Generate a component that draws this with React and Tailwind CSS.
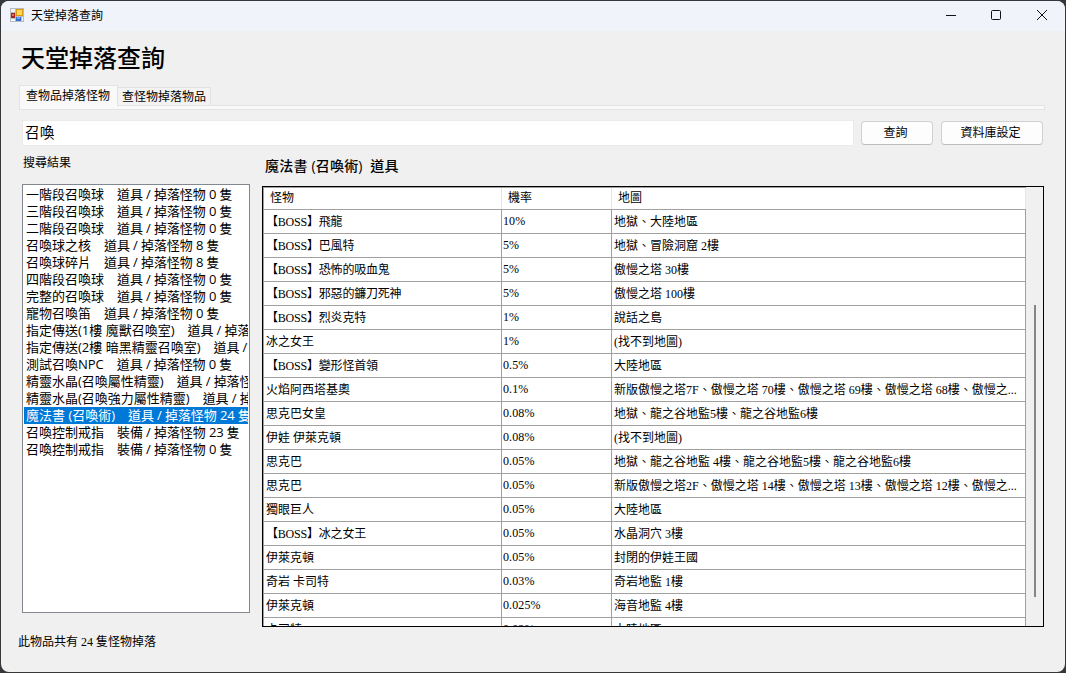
const drops = [
  ["【BOSS】飛龍", "10%", "地獄、大陸地區"],
  ["【BOSS】巴風特", "5%", "地獄、冒險洞窟 2樓"],
  ["【BOSS】恐怖的吸血鬼", "5%", "傲慢之塔 30樓"],
  ["【BOSS】邪惡的鐮刀死神", "5%", "傲慢之塔 100樓"],
  ["【BOSS】烈炎克特", "1%", "說話之島"],
  ["冰之女王", "1%", "(找不到地圖)"],
  ["【BOSS】變形怪首領", "0.5%", "大陸地區"],
  ["火焰阿西塔基奧", "0.1%", "新版傲慢之塔7F、傲慢之塔 70樓、傲慢之塔 69樓、傲慢之塔 68樓、傲慢之..."],
  ["思克巴女皇", "0.08%", "地獄、龍之谷地監5樓、龍之谷地監6樓"],
  ["伊娃 伊萊克頓", "0.08%", "(找不到地圖)"],
  ["思克巴", "0.05%", "地獄、龍之谷地監 4樓、龍之谷地監5樓、龍之谷地監6樓"],
  ["思克巴", "0.05%", "新版傲慢之塔2F、傲慢之塔 14樓、傲慢之塔 13樓、傲慢之塔 12樓、傲慢之..."],
  ["獨眼巨人", "0.05%", "大陸地區"],
  ["【BOSS】冰之女王", "0.05%", "水晶洞穴 3樓"],
  ["伊萊克頓", "0.05%", "封閉的伊娃王國"],
  ["奇岩 卡司特", "0.03%", "奇岩地監 1樓"],
  ["伊萊克頓", "0.025%", "海音地監 4樓"],
  ["卡司特", "0.02%", "大陸地區"],
];

const items = [
  ["一階段召喚球", "道具 / 掉落怪物 0 隻"],
  ["三階段召喚球", "道具 / 掉落怪物 0 隻"],
  ["二階段召喚球", "道具 / 掉落怪物 0 隻"],
  ["召喚球之核", "道具 / 掉落怪物 8 隻"],
  ["召喚球碎片", "道具 / 掉落怪物 8 隻"],
  ["四階段召喚球", "道具 / 掉落怪物 0 隻"],
  ["完整的召喚球", "道具 / 掉落怪物 0 隻"],
  ["寵物召喚笛", "道具 / 掉落怪物 0 隻"],
  ["指定傳送(1樓 魔獸召喚室)", "道具 / 掉落怪物 0 隻"],
  ["指定傳送(2樓 暗黑精靈召喚室)", "道具 / 掉落怪物 0 隻"],
  ["測試召喚NPC", "道具 / 掉落怪物 0 隻"],
  ["精靈水晶(召喚屬性精靈)", "道具 / 掉落怪物 0 隻"],
  ["精靈水晶(召喚強力屬性精靈)", "道具 / 掉落怪物 0 隻"],
  ["魔法書 (召喚術)", "道具 / 掉落怪物 24 隻"],
  ["召喚控制戒指", "裝備 / 掉落怪物 23 隻"],
  ["召喚控制戒指", "裝備 / 掉落怪物 0 隻"],
];

const SELECTED = 13;

function AppIcon() {
  return (
    <svg width="14" height="14" viewBox="0 0 14 14" shapeRendering="crispEdges">
      <rect width="14" height="14" fill="#b9bcc2" />
      <rect x="1" y="1" width="4" height="3" fill="#eef1f5" />
      <rect x="1" y="11" width="4" height="2" fill="#f7f7f7" />
      <rect x="12" y="9" width="1" height="4" fill="#f7f7f7" />
      <rect x="1" y="5" width="4" height="5" fill="#a8231a" />
      <rect x="2" y="6" width="2" height="2" fill="#e0705f" />
      <rect x="6" y="1" width="7" height="7" fill="#d99a10" />
      <rect x="7" y="2" width="5" height="5" fill="#ffd75a" />
      <rect x="6" y="9" width="5" height="4" fill="#2f6fd0" />
      <rect x="7" y="9" width="3" height="2" fill="#6ea5ee" />
    </svg>
  );
}

function TitleBar() {
  return (
    <div className="flex h-[30px] shrink-0 items-center bg-[#f0f3fa] pb-[2px] pl-[9px]">
      <AppIcon />
      <span className="ml-[7px] flex-1 font-['Noto_Sans_CJK_TC',sans-serif] text-xs leading-none">
        天堂掉落查詢
      </span>
      <svg width="115" height="12" viewBox="0 0 115 12" fill="none" stroke="#111" className="mr-[11px]">
        <path d="M7 6.5h10" />
        <rect x="52.5" y="1.5" width="9" height="9" rx="1" />
        <path d="M98 1l10 10M108 1L98 11" />
      </svg>
    </div>
  );
}

function Tabs() {
  return (
    <div className="ml-[18px] w-[1026px]">
      <div className="flex h-5 items-end">
        <div className="relative z-10 -mb-px flex h-[21px] w-[99px] items-center border border-b-0 border-[#e3e3e3] bg-[#f9f9f9] pb-px pl-[6px]">
          <span className="leading-none">查物品掉落怪物</span>
        </div>
        <div className="flex h-[18px] w-[93px] items-center border border-b-0 border-l-0 border-[#e3e3e3] bg-[#f3f3f3] pl-1 pt-px">
          <span className="leading-none">查怪物掉落物品</span>
        </div>
      </div>
      <div className="h-[5px] border border-[#e3e3e3] bg-[#f9f9f9]" />
    </div>
  );
}

function ItemList() {
  return (
    <div className="h-[429px] w-[228px] overflow-hidden border border-[#828790] bg-white p-px font-['Open_Sans','Noto_Sans_CJK_TC',sans-serif] text-[13px]">
      {items.map(([name, info], i) => (
        <div
          key={i}
          className={`flex h-[17px] items-center gap-[13px] overflow-hidden whitespace-nowrap pl-[2px] leading-[17px] ${
            i === SELECTED ? "bg-[#0078d7] text-white" : ""
          }`}
        >
          <span>{name}</span>
          <span className="tracking-[-0.1px]">{info}</span>
        </div>
      ))}
    </div>
  );
}

function DropTable() {
  return (
    <div className="flex h-[441px] w-[782px] overflow-hidden border border-black bg-[#f0f0f0]">
      <div className="w-[763px] shrink-0 border-l border-t border-[#a0a0a0] bg-white">
        <div className="grid h-[22px] grid-cols-[238px_110px_414px] border-b border-[#a0a0a0] leading-[20px]">
          <div className="border-r border-[#e5e5e5] pl-[6px]">怪物</div>
          <div className="border-r border-[#e5e5e5] pl-[6px]">機率</div>
          <div className="border-r border-[#e5e5e5] pl-[6px]">地圖</div>
        </div>
        {drops.map(([monster, rate, map], i) => (
          <div
            key={i}
            className="grid h-6 grid-cols-[238px_110px_414px] whitespace-nowrap border-b border-[#a0a0a0] leading-[25px]"
          >
            <div
              className={`h-[23px] border-r border-[#a0a0a0] pl-[2px] ${
                monster.startsWith("【") ? "tracking-[-0.2px]" : ""
              }`}
            >
              {monster}
            </div>
            <div className="h-[23px] border-r border-[#a0a0a0] pl-px leading-[23px] tracking-[0.1px]">{rate}</div>
            <div className="h-[23px] border-r border-[#a0a0a0] pl-[2px]">{map}</div>
          </div>
        ))}
      </div>
      {/* scrollbar */}
      <div className="flex-1 pl-2 pt-[118px]">
        <div className="h-[292px] w-[2px] bg-[#868686]" />
      </div>
    </div>
  );
}

export default function App() {
  return (
    <div className="h-[673px] w-[1066px] overflow-hidden bg-[#37373b] p-px font-['Liberation_Serif','Noto_Sans_CJK_TC',serif] text-xs text-black">
      <div className="flex h-[671px] w-[1064px] flex-col overflow-hidden rounded-lg bg-[#f0f0f0]">
        <TitleBar />
        <h1 className="ml-5 mt-[10px] h-11 font-['Noto_Sans_CJK_TC',sans-serif] text-2xl font-medium leading-[31px]">
          天堂掉落查詢
        </h1>
        <Tabs />

        <div className="ml-[21px] mt-[10px] flex h-[26px] items-center">
          <div className="flex h-[26px] w-[832px] items-center border border-[#ebebeb] bg-white pb-[2px] pl-[2px] font-['Noto_Sans_CJK_TC',sans-serif] text-[14.67px] leading-none">
            召喚
          </div>
          <button className="ml-[7px] h-6 w-[72px] rounded border border-[#d0d0d0] border-b-[#bcbcbc] bg-[#fdfdfd] pr-[3px]">
            查詢
          </button>
          <button className="ml-2 h-6 w-[102px] rounded border border-[#d0d0d0] border-b-[#bcbcbc] bg-[#fdfdfd] pr-[3px]">
            資料庫設定
          </button>
        </div>

        <div className="ml-[21px] flex">
          <div className="w-[240px]">
            <div className="h-[38px] pl-px pt-[8px] leading-[18px]">搜尋結果</div>
            <ItemList />
          </div>
          <div>
            <div className="h-10 whitespace-pre pl-[3px] pt-[10px] font-['Open_Sans','Noto_Sans_CJK_TC',sans-serif] text-sm font-medium leading-5 tracking-[0.2px]">
              {"魔法書 (召喚術)  道具"}
            </div>
            <DropTable />
          </div>
        </div>

        <div className="ml-[17px] mt-[6px] leading-[18px]">此物品共有 24 隻怪物掉落</div>
      </div>
    </div>
  );
}
